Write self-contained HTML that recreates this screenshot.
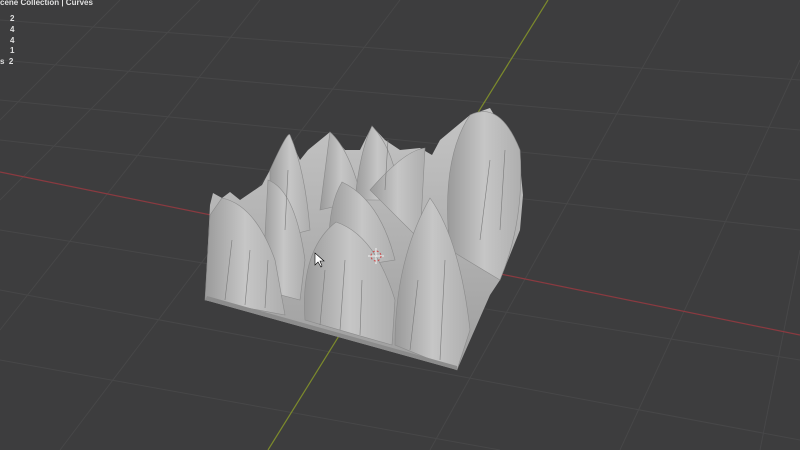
<!DOCTYPE html>
<html><head><style>
html,body{margin:0;padding:0;width:800px;height:450px;overflow:hidden;background:#3d3d3e;}
.t{position:absolute;font:bold 8px "Liberation Sans",sans-serif;color:#e0e0e0;}
</style></head><body>
<svg width="800" height="450" style="position:absolute;left:0;top:0">
<defs>
<linearGradient id="g" x1="0" y1="0" x2="0" y2="1"><stop offset="0" stop-color="#c4c4c4"/><stop offset="1" stop-color="#9e9e9e"/></linearGradient>
<linearGradient id="p" x1="0" y1="0" x2="1" y2="0"><stop offset="0" stop-color="#9a9a9a"/><stop offset="0.5" stop-color="#c6c6c6"/><stop offset="1" stop-color="#aeaeae"/></linearGradient>
</defs>
<rect width="800" height="450" fill="#3d3d3e"/>
<g stroke="#474748" stroke-width="1" fill="none">
<path d="M0 60 L800 130 M0 100 L800 180 M0 140 L800 230 M0 230 L800 360 M0 290 L800 440 M0 20 L800 80 M0 360 L500 450"/>
<path d="M120 0 L0 120 M260 0 L0 330 M400 0 L60 450 M680 0 L430 450 M800 60 L620 450 M800 250 L760 450 M200 0 L0 200"/>
</g>
<line x1="0" y1="172" x2="800" y2="335" stroke="#8a3a40" stroke-width="1.2"/>
<line x1="548" y1="0" x2="268" y2="450" stroke="#7c8a2c" stroke-width="1.2"/>
<polygon fill="url(#g)" points="205,300 210,205 213,193 222,198 230,192 240,200 262,185 270,170 288,135 300,160 308,150 330,132 345,150 360,150 372,126 385,140 400,150 420,148 432,155 440,140 470,115 490,108 500,125 518,145 523,195 520,230 500,280 490,295 457,370"/>
<g fill="url(#p)" stroke="#8a8a8a" stroke-width="0.6">
<path d="M270 170 Q288 130 290 135 Q305 170 310 230 L270 240 Z"/>
<path d="M330 132 Q350 150 362 200 L320 210 Z"/>
<path d="M372 126 Q395 150 400 200 L355 200 Q360 150 372 126Z"/>
<path d="M470 115 Q500 100 520 150 Q525 220 500 280 L450 250 Q440 160 470 115Z"/>
<path d="M425 148 Q405 150 370 190 L420 240 Z"/>
<path d="M268 180 Q295 190 305 260 L300 300 L262 290 Z"/>
<path d="M342 182 Q380 200 395 260 L330 270 Q325 210 342 182Z"/>
<path d="M336 222 Q375 235 395 300 L392 345 L305 320 Q300 250 336 222Z"/>
<path d="M430 198 Q460 240 470 330 L457 370 L395 345 Q395 260 430 198Z"/>
<path d="M222 198 Q255 205 275 260 L285 315 L205 300 L210 215Z"/>
</g>
<g stroke="#7a7a7a" stroke-width="0.6" fill="none">
<path d="M225 300 L232 240 M245 305 L250 250 M320 325 L325 270 M340 330 L345 260 M410 350 L418 280 M440 360 L445 260 M480 240 L490 160 M500 230 L505 150 M285 230 L288 170 M385 190 L388 140 M360 335 L362 280 M265 308 L268 260"/>
</g>
<path d="M205 300 L457 370 L457 366 L207 296Z" fill="#8c8c8c"/>
<g stroke="#fff" stroke-width="0.8"><path d="M368 256 L384 256 M376 248 L376 264"/></g>
<circle cx="376" cy="256" r="5" fill="none" stroke="#c44" stroke-dasharray="2 2" stroke-width="1"/>
<path d="M315 253 L315 265 L318 262 L321 267 L322 266 L320 261 L324 261Z" fill="#fff" stroke="#000" stroke-width="0.6"/>
</svg>
<div class="t" style="left:0;top:-2px">cene Collection | Curves</div>
<div class="t" style="left:10px;top:14px">2</div>
<div class="t" style="left:10px;top:25px">4</div>
<div class="t" style="left:10px;top:36px">4</div>
<div class="t" style="left:10px;top:46px">1</div>
<div class="t" style="left:0;top:57px">s&nbsp;&nbsp;2</div>
</body></html>
